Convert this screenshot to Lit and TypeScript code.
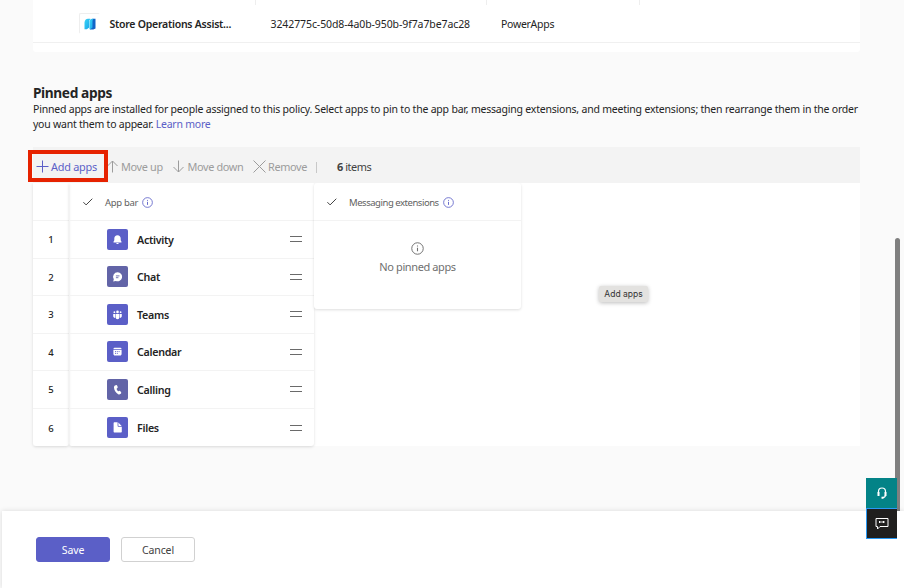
import { LitElement, html, css, svg } from "lit";
import { customElement } from "lit/decorators.js";

const glyphs: Record<string, unknown> = {
  Activity: svg`<path fill="#fff" d="M10.500 6.300c-2 0-3.200 1.400-3.200 3.200v1.700l-.9 1.700c-.1.300.1.500.4.500h7.400c.3 0 .5-.2.4-.5l-.9-1.700V9.500c0-1.800-1.200-3.200-3.200-3.200zM9.200 13.900h2.600c-.1.600-.7 1-1.300 1s-1.200-.4-1.300-1z"/>`,
  Chat: svg`<path fill="#fff" d="M10.700 6.300a4.500 4.500 0 1 1-1.900 8.600l-2.600.6.600-2.300a4.500 4.500 0 0 1 3.900-6.900z"/><path stroke="#6264a7" stroke-width=".9" d="M8.900 9.900h3.600M8.900 11.700h2.500"/>`,
  Teams: svg`<g fill="#fff"><circle cx="10.500" cy="7.900" r="1.300"/><circle cx="7.400" cy="8.200" r=".9"/><circle cx="13.600" cy="8.200" r=".9"/><path d="M8.600 10h3.800v3.300a1.900 1.900 0 0 1-3.800 0zM6.200 10h1.900v3.900c-1.200 0-1.900-.8-1.900-1.900zM12.900 10h1.900v2c0 1.100-.7 1.900-1.900 1.900z"/></g>`,
  Calendar: svg`<path fill="#fff" d="M8 6.700h5c1 0 1.600.6 1.600 1.400H6.400C6.400 7.300 7 6.700 8 6.700zM6.400 8.800h8.200v4.300c0 .9-.6 1.500-1.500 1.500H7.900c-.9 0-1.500-.6-1.500-1.500z"/><path stroke="#5b5fc7" stroke-width=".9" stroke-dasharray="1 .8" d="M8 10.600h5M8 12.400h3.400"/>`,
  Calling: svg`<path fill="#fff" d="M8.100 6.400l1-.3c.5-.1.900.1 1.100.6l.5 1.300c.1.400 0 .8-.3 1l-.8.800c.1.900.9 2 1.600 2.400l1.100-.3c.4-.1.800 0 1 .3l.8 1.100c.3.400.2.900-.1 1.200l-.6.600c-.6.500-1.500.6-2.200.2-2.200-1.300-4-4.100-4.200-6.600-.1-1 .2-2 1.100-2.300z"/>`,
  Files: svg`<path fill="#fff" d="M7.600 5.300h3v3.400c0 .6.400 1 1 1h3.200v4.700c0 .6-.4 1-1 1H7.600c-.6 0-1-.4-1-1V6.300c0-.6.400-1 1-1z"/><path fill="#fff" d="M11.400 5.500l3.200 3.400h-2.800c-.3 0-.4-.1-.4-.4z"/>`,
};

@customElement("app-root")
export class AppRoot extends LitElement {
  static styles = css`
    :host { display: block; position: relative; width: 904px; height: 588px; overflow: hidden; background: #fafafa;
      font-family: "Noto Sans", sans-serif; font-size: 10.500px; color: #242424; }
    * { box-sizing: border-box; }
    svg { display: block; flex: none; fill: none; }
    span { white-space: nowrap; }
    .page { height: 511px; padding: 0 44px 0 33px; display: flex; flex-direction: column; }
    .policy { height: 52px; background: #fff; border-radius: 0 0 3px 3px; }
    .ticks { height: 5px; display: grid; grid-template-columns: 223px 231px 153px 1fr; }
    .tick { border-right: 1px solid #eee; }
    .tick:last-child { border: 0; }
    .app { height: 38px; border-bottom: 1px solid #f0f0f0; display: grid; grid-template-columns: 46px 30.500px 161px 230.500px auto; align-items: center; }
    .app span { padding-top: 1px; }
    .logo { width: 21px; height: 21px; grid-column: 2; border: 1px solid #eee; border-right-color: #fff; border-bottom-color: #fff; display: grid; place-items: center; border-radius: 2px; }
    .semi { font-weight: 600; }
    .t1 { letter-spacing: -.25px; }
    .t2 { letter-spacing: -.09px; }
    .t3 { letter-spacing: -.28px; }
    h2 { margin: 31px 0 0; font-size: 13.700px; line-height: 19px; font-weight: 700; height: 18px; letter-spacing: -.38px; }
    p { margin: 0; line-height: 15.600px; height: 46px; padding-top: .5px; }
    p span { display: block; width: max-content; }
    p .link { display: inline; }
    .p1 { letter-spacing: -.208px; }
    .p2 { letter-spacing: -.232px; }
    .link { color: #5b5fc7; }
    .bar { height: 36px; background: #f3f3f3; display: flex; align-items: center; padding: 4px 0 0 3px; color: #9c9c9c; font-size: 10.900px; letter-spacing: -.35px; position: relative; }
    .bar span { position: relative; top: -1px; }
    .cmd { display: flex; align-items: center; gap: 2px; height: 20px; }
    .cmd svg { margin-top: -1px; }
    .add { width: 71px; color: #5b5fc7; letter-spacing: -.25px; }
    .up { width: 66px; } .down { width: 80px; } .rem { width: 63px; }
    .down { gap: 2.500px; }
    .sep { width: 1px; height: 11px; background: #c8c8c8; margin-right: 20px; }
    .count { color: #424242; letter-spacing: -.46px; } .count b { font-weight: 700; }
    .mark { position: absolute; left: -5px; top: 3px; width: 80px; height: 32px; border: 4px solid #e62200; }
    .grid { background: #fff; display: grid; grid-template-columns: 36px 245px 207px; height: 263px; }
    .nums { box-shadow: 0 1px 3px #0002; border-radius: 0 0 3px 3px; }
    .list { box-shadow: 0 1px 3px #0002; border-radius: 0 0 3px 3px; }
    .head { height: 38px; border-bottom: 1px solid #f3f3f3; display: flex; align-items: center; font-size: 9.500px; letter-spacing: -.3px; color: #616161; padding: 1px 0 0 13px; }
    .head svg.ck { margin-right: 11px; } .head span { margin-right: 3.500px; }
    .msg .head { padding-left: 12px; letter-spacing: -.46px; }
    .msg .head span { margin-right: 4.500px; }
    .rows { display: grid; grid-template-rows: repeat(6, 37.550px); }
    .num, .row { display: flex; align-items: center; border-bottom: 1px solid #f3f3f3; }
    .num { justify-content: center; font-size: 9.500px; font-weight: 500; padding-top: 1px; }
    .num:last-child, .row:last-child { border: 0; }
    .row { padding: 0 12.500px 0 38px; font-size: 10.700px; letter-spacing: -.3px; }
    .row span { padding-top: 1px; }
    .tile { width: 21px; height: 21px; border-radius: 2px; background: #5b5fc7; margin-right: 9px; }
    .soft { background: #6264a7; }
    .drag { margin-left: auto; }
    .msg { height: 126px; background: #fff; border-radius: 3px; box-shadow: 0 1px 3px #0002; display: flex; flex-direction: column; }
    .none { flex: 1; display: flex; flex-direction: column; align-items: center; color: #707070; font-size: 11px; letter-spacing: -.4px; padding-top: 21px; gap: 4px; line-height: 15px; }
    .foot { position: relative; margin-left: 2px; height: 77px; background: #fff; box-shadow: 0 0 5px #0002; padding: 26px 34px; display: flex; gap: 11px; }
    .btn { width: 74px; height: 25px; font: inherit; border: 1px solid #d1d1d1; border-radius: 3px; background: #fff; color: #424242; padding: 0; letter-spacing: -.12px; }
    .primary { background: #5b5fc7; border-color: #5b5fc7; color: #fff; }
    .tip { position: absolute; left: 599px; top: 286px; width: 49px; height: 16px; background: #e3e2e0; border-radius: 2px; box-shadow: 0 1px 4px #0004; font: 8.500px/16px Inter, sans-serif; text-align: center; color: #333; }
    .thumb { position: absolute; left: 895px; top: 238px; width: 4.500px; height: 273px; background: #7f7f7f; border-radius: 3px 3px 0 0; }
    .help { position: absolute; left: 866px; top: 478px; width: 31px; }
    .h1, .h2 { display: grid; place-items: center; background: #038387; height: 30px; }
    .h2 { background: #201f1e; border: 1px solid #2899f5; border-right: 0; height: 31px; }
  `;

  private info(size: number, color: string) {
    return html`<svg width=${size} height=${size} viewBox="0 0 12 12" stroke=${color}><circle cx="6" cy="6" r="5.300" stroke-width=".9"/><path d="M6 5.300v3.300M6 3.200v1"/></svg>`;
  }
  private check() {
    return html`<svg class="ck" width="12" height="12" viewBox="0 0 12 12" stroke="#424242" stroke-width="1"><path d="M1.400 6.200l2.700 2.700 6.200-6.200"/></svg>`;
  }

  render() {
    const apps = Object.keys(glyphs);
    return html`
      <div class="page">
        <div class="policy">
          <div class="ticks"><div class="tick"></div><div class="tick"></div><div class="tick"></div><div class="tick"></div></div>
          <div class="app">
            <div class="logo"><svg width="12" height="12" viewBox="0 0 12 12"><defs><linearGradient id="a" x2="1" y2="1"><stop stop-color="#38d5f5"/><stop offset="1" stop-color="#1aa3ea"/></linearGradient></defs><path fill="#1264c8" d="M6 3Q6.500.7 9 .7h2.500v9.800L9.300 11.500H6z"/><path fill="url(#a)" d="M5.500 3.500Q6 .9 8 .7h1.500Q8.500 1.500 8.500 3.500v6L6.500 11.300h-1z"/><path fill="url(#a)" d="M.5 4.500Q.8.700 4 .7h2.300Q5.200 2 5.200 4v5.500L2.800 11.200H.5z"/></svg></div>
            <span class="semi t1">Store Operations Assist...</span>
            <span class="t2">3242775c-50d8-4a0b-950b-9f7a7be7ac28</span>
            <span class="t3">PowerApps</span>
          </div>
        </div>
        <h2>Pinned apps</h2>
        <p><span class="p1">Pinned apps are installed for people assigned to this policy. Select apps to pin to the app bar, messaging extensions, and meeting extensions; then rearrange them in the order</span>
        <span class="p2">you want them to appear. <span class="link">Learn more</span></span></p>
        <div class="bar">
          <div class="cmd add"><svg width="13" height="13" viewBox="0 0 13 13" stroke="#5b5fc7"><path d="M6.500.500v12M.500 6.500h12"/></svg><span>Add apps</span></div>
          <div class="cmd up"><svg width="12" height="13" viewBox="0 0 12 13" stroke="#9c9c9c"><path d="M5.500 12.500V1M.500 6l5-5 5 5"/></svg><span>Move up</span></div>
          <div class="cmd down"><svg width="12" height="13" viewBox="0 0 12 13" stroke="#9c9c9c"><path d="M5.500.500V12M.500 7l5 5 5-5"/></svg><span>Move down</span></div>
          <div class="cmd rem"><svg width="13" height="13" viewBox="0 0 13 13" stroke="#9c9c9c"><path d="M.500.500l12 12M12.500.500l-12 12"/></svg><span>Remove</span></div>
          <div class="sep"></div>
          <span class="count"><b>6</b> items</span>
          <div class="mark"></div>
        </div>
        <div class="grid">
          <div class="nums"><div class="head"></div><div class="rows">${apps.map((_, i) => html`<div class="num">${i + 1}</div>`)}</div></div>
          <div class="list">
            <div class="head">${this.check()}<span>App bar</span>${this.info(11, "#5b5fc7")}</div>
            <div class="rows">${apps.map((a, i) => html`<div class="row">
              <svg class="tile ${i === 1 || i === 4 ? "soft" : ""}" viewBox="0 0 21 21">${glyphs[a]}</svg>
              <span class="semi">${a}</span>
              <svg class="drag" width="12" height="8" viewBox="0 0 12 8" stroke="#6a6a6a"><path d="M0 1.500h12M0 6.500h12"/></svg></div>`)}</div>
          </div>
          <div class="msg">
            <div class="head">${this.check()}<span>Messaging extensions</span>${this.info(11, "#5b5fc7")}</div>
            <div class="none">${this.info(13, "#707070")}<span>No pinned apps</span></div>
          </div>
        </div>
      </div>
      <div class="thumb"></div>
      <div class="foot"><button class="btn primary"><span>Save</span></button><button class="btn"><span>Cancel</span></button></div>
      <div class="tip"><span>Add apps</span></div>
      <div class="help">
        <div class="h1"><svg width="12" height="14" viewBox="0 0 12 14" stroke="#fff"><path d="M2.500 8.500V5.500a3.500 3.500 0 0 1 7 0v3M9.500 9q0 2.500-3 2.700" stroke-width="1.200"/><path d="M2.500 6v4M9.500 6v4M5.500 11.800h2" stroke-width="2"/></svg></div>
        <div class="h2"><svg width="14" height="13" viewBox="0 0 14 13" stroke="#fff"><path d="M1 1.500h12v8H5L2.500 12V9.500H1z"/><path d="M4 5h2.500M7.500 5H10" stroke-width="1.800" stroke-dasharray="1.500 .6"/></svg></div>
      </div>`;
  }
}
